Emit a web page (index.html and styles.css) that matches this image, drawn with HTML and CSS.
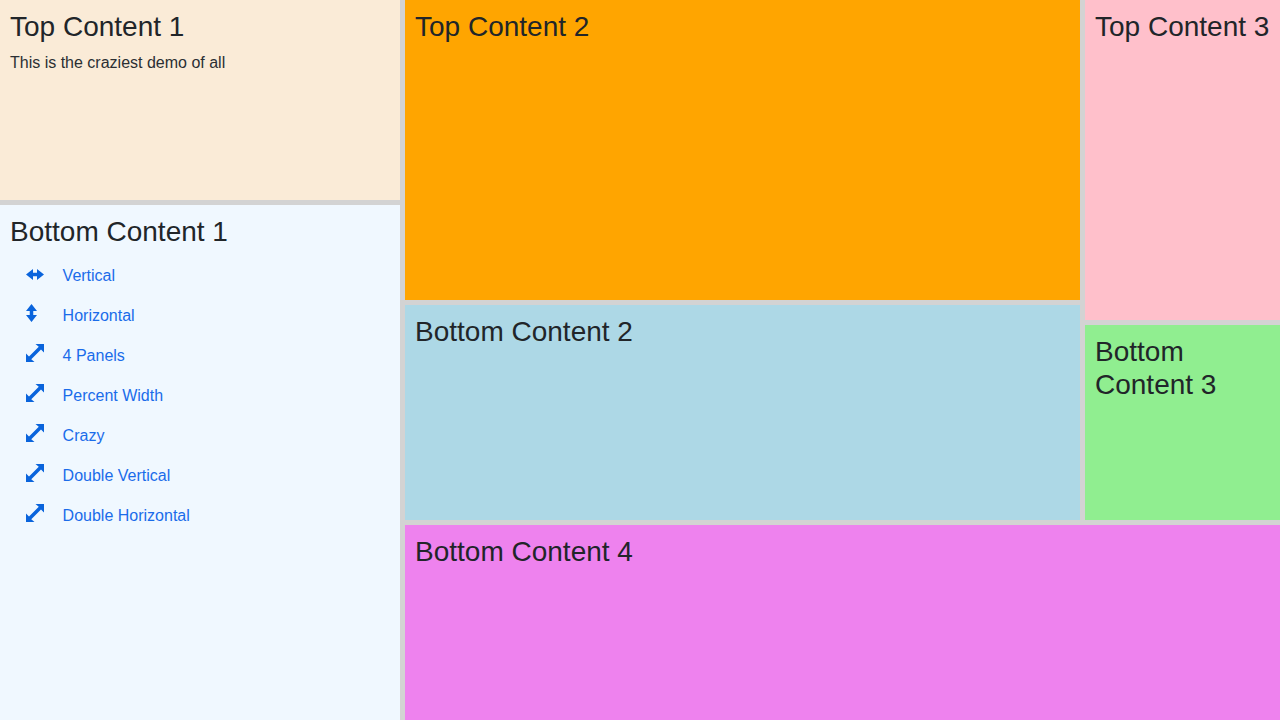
FILE: index.html
```html
<!DOCTYPE html>
<html lang="en">
<head>
<meta charset="utf-8">
<title>Split panels demo</title>
<link rel="stylesheet" href="styles.css">
</head>
<body>
<div class="app">
  <div class="col-left">
    <section class="pane pane-linen h-200">
      <h3>Top Content 1</h3>
      <p>This is the craziest demo of all</p>
    </section>
    <section class="pane pane-alice grow">
      <h3>Bottom Content 1</h3>
      <ul class="nav">
        <li><svg class="ico" viewBox="0 0 18 18"><path d="M0 10.500 7 5v3.750h4V5l7 5.500-7 5.500v-3.750H7V16z"/></svg><a href="#">Vertical</a></li>
        <li><svg class="ico" viewBox="0 0 18 18"><path d="M5.500 0 11 7H7.250v4H11l-5.500 7L0 11h3.750V7H0z"/></svg><a href="#">Horizontal</a></li>
        <li><svg class="ico" viewBox="0 0 18 18"><path d="M18 0v8.500l-3-3L5.250 15.250 8.500 18H0V9.500l3 3L12.750 2.750 9.500 0z"/></svg><a href="#">4 Panels</a></li>
        <li><svg class="ico" viewBox="0 0 18 18"><path d="M18 0v8.500l-3-3L5.250 15.250 8.500 18H0V9.500l3 3L12.750 2.750 9.500 0z"/></svg><a href="#">Percent Width</a></li>
        <li><svg class="ico" viewBox="0 0 18 18"><path d="M18 0v8.500l-3-3L5.250 15.250 8.500 18H0V9.500l3 3L12.750 2.750 9.500 0z"/></svg><a href="#">Crazy</a></li>
        <li><svg class="ico" viewBox="0 0 18 18"><path d="M18 0v8.500l-3-3L5.250 15.250 8.500 18H0V9.500l3 3L12.750 2.750 9.500 0z"/></svg><a href="#">Double Vertical</a></li>
        <li><svg class="ico" viewBox="0 0 18 18"><path d="M18 0v8.500l-3-3L5.250 15.250 8.500 18H0V9.500l3 3L12.750 2.750 9.500 0z"/></svg><a href="#">Double Horizontal</a></li>
      </ul>
    </section>
  </div>
  <div class="col-right">
    <div class="upper">
      <div class="col-mid">
        <section class="pane pane-orange h-300"><h3>Top Content 2</h3></section>
        <section class="pane pane-blue grow"><h3>Bottom Content 2</h3></section>
      </div>
      <div class="col-side">
        <section class="pane pane-pink h-320"><h3>Top Content 3</h3></section>
        <section class="pane pane-green grow"><h3>Bottom Content 3</h3></section>
      </div>
    </div>
    <section class="pane pane-violet grow"><h3>Bottom Content 4</h3></section>
  </div>
</div>
</body>
</html>
```
FILE: styles.css
```css
* { box-sizing: border-box; }
html, body { height: 100%; margin: 0; }
body {
  overflow: hidden;
  font-family: "Liberation Sans", Arial, sans-serif;
  font-size: 16px;
  line-height: 1.5;
  color: #212529;
  background: #d3d3d3;
}
.app { display: flex; gap: 5px; width: 1280px; height: 720px; }
.col-left { display: flex; flex-direction: column; gap: 5px; width: 400px; }
.col-right { display: flex; flex-direction: column; gap: 5px; flex: 1; min-width: 0; }
.upper { display: flex; gap: 5px; height: 520px; }
.col-mid { display: flex; flex-direction: column; gap: 5px; width: 675px; }
.col-side { display: flex; flex-direction: column; gap: 5px; flex: 1; min-width: 0; }
.pane { padding: 10px; overflow: hidden; }
.grow { flex: 1; min-height: 0; }
.h-200 { height: 200px; }
.h-300 { height: 300px; }
.h-320 { height: 320px; }
.pane-linen { background: #faebd7; }
.pane-alice { background: #f0f8ff; }
.pane-orange { background: #ffa500; }
.pane-blue { background: #add8e6; }
.pane-pink { background: #ffc0cb; }
.pane-green { background: #90ee90; }
.pane-violet { background: #ee82ee; }
h3 { margin: 0 0 8px; font-size: 28px; font-weight: 500; line-height: 33px; }
p { margin: 0 0 16px; color: #2a2f33; }
.nav { list-style: none; margin: 0; padding: 0; }
.nav li { display: flex; align-items: center; height: 40px; padding-left: 16px; }
.ico { flex: none; width: 18px; height: 18px; margin: -6px 18.6px 0 0; fill: #0a64dc; }
.nav a { color: #1a6cea; text-decoration: none; }
```
